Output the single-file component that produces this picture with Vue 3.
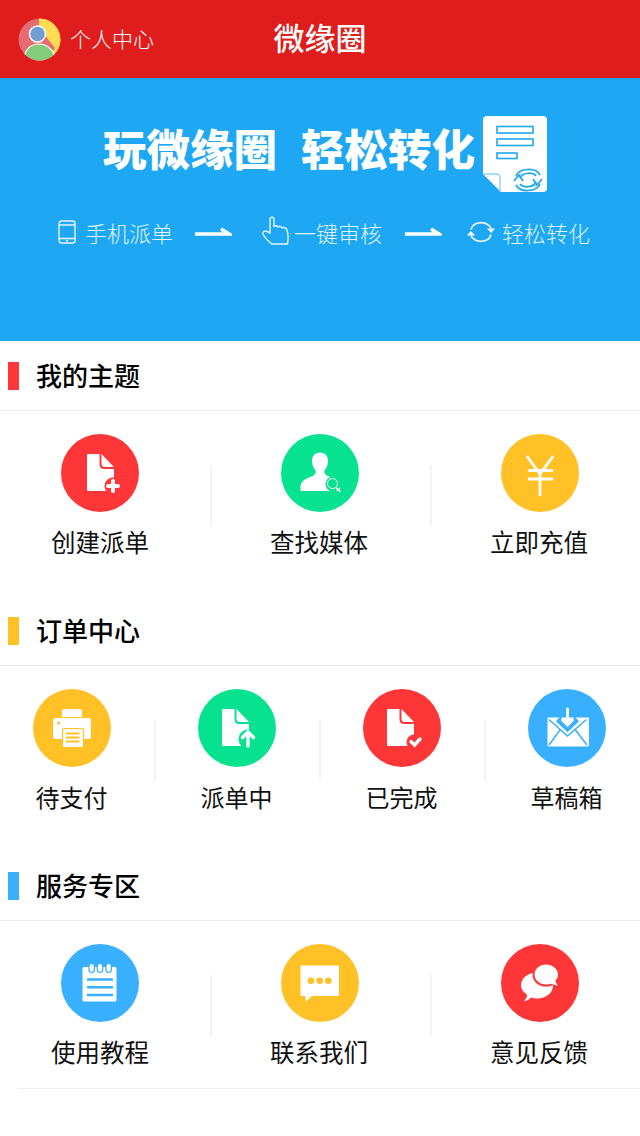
<template>
  <div class="page">
    <header class="top">
      <div class="user">
        <svg class="avatar" viewBox="0 0 43 43">
          <defs>
            <clipPath id="av"><circle cx="21.5" cy="21.5" r="21" /></clipPath>
          </defs>
          <g clip-path="url(#av)">
            <rect width="43" height="43" fill="#e56c70" />
            <path d="M21 0H43V43H30L37 30 21 10Z" fill="#fbdc52" />
            <path d="M6 43C6 32 12 26 21 26 30 26 37 33 37 43Z" fill="#82cc7c" stroke="#fff" stroke-width="1.2" />
            <circle cx="19.5" cy="16" r="8" fill="#719dd3" stroke="#fff" stroke-width="1.5" />
          </g>
        </svg>
        <span>个人中心</span>
      </div>
      <h1>微缘圈</h1>
    </header>

    <section class="banner">
      <div class="slogan">
        <span class="slogan-a">玩微缘圈</span>
        <span class="slogan-b">轻松转化</span>
        <svg class="doc" viewBox="0 0 64 77">
          <path d="M4 0H60Q64 0 64 4V72Q64 76 60 76H18L0 58V4Q0 0 4 0Z" fill="#fff" />
          <path d="M1 58H13Q17 58 17 62V76" fill="none" stroke="#8fd2f8" stroke-width="1.5" />
          <g fill="none" stroke="#1ea8f3" stroke-width="1.6">
            <rect x="14" y="10.5" width="36" height="6.5" />
            <rect x="14" y="23" width="36" height="6.5" />
            <rect x="14" y="37" width="20" height="5.5" />
            <path d="M33 60C36 52 53 51 57 59M57 68C54 76 37 77 33 69" stroke-width="1.7" />
            <path d="M37 62C40 56 50 56 53 60M53 66C50 72 40 72 37 68" stroke-width="1.7" />
            <path d="M31 65L36 59 40 65M50 63L54 69 59 63" stroke-width="1.7" />
          </g>
        </svg>
      </div>

      <div class="steps">
        <svg class="ic-phone" viewBox="0 0 18 24">
          <g fill="none" stroke="#fff" stroke-width="1.4" opacity=".9">
            <rect x="1" y="1" width="16" height="22" rx="2.5" />
            <path d="M1 5H17M1 18.5H17" />
          </g>
          <circle cx="9" cy="20.8" r="1" fill="#fff" />
        </svg>
        <span class="step-text">手机派单</span>
        <svg class="arrow" viewBox="0 0 38 12"><path d="M1 8H35L27 3" fill="none" stroke="#fff" stroke-width="3.4" /></svg>
        <svg class="ic-hand" viewBox="0 0 28 29">
          <path d="M8 17V3.500C8 0.500 12 0.500 12 3.500V10.500C13 9.500 15 9.500 16 11 17.200 10 19 10.200 20 11.800 21.500 11 24 11.500 25 14 26.500 18 26.500 22 25.500 28H9.500C6 24.500 3 22 1.200 18.500 0 16 3 14 5 15.500Z" fill="none" stroke="#fff" stroke-width="1.4" stroke-linejoin="round" opacity=".9" />
        </svg>
        <span class="step-text">一键审核</span>
        <svg class="arrow" viewBox="0 0 38 12"><path d="M1 8H35L27 3" fill="none" stroke="#fff" stroke-width="3.4" /></svg>
        <svg class="ic-refresh" viewBox="0 0 28 24">
          <g fill="none" stroke="#fff" stroke-width="1.6" opacity=".95">
            <path d="M4 9.500C6 2 18 -0.500 24 8" />
            <path d="M24 14.500C22 22 10 24.500 4 16" />
          </g>
          <path d="M20 8.500H28L24.200 13ZM0 15.500H8L3.800 11Z" fill="#fff" />
        </svg>
        <span class="step-text">轻松转化</span>
      </div>
    </section>

    <section v-for="sec in sections" :key="sec.title" class="block">
      <div class="block-head">
        <i class="mark" :class="sec.mark"></i>
        <h2>{{ sec.title }}</h2>
      </div>
      <div class="cells" :class="sec.items.length === 4 ? 'four' : 'three'">
        <div v-for="(it, i) in sec.items" :key="it.label" class="cell" :class="{ last: i === sec.items.length - 1 }">
          <svg class="disc" viewBox="0 0 78 78">
            <circle cx="39" cy="39" r="39" :fill="colors[it.color]" />

            <!-- 文件类 -->
            <g v-if="it.icon.startsWith('file')" :transform="it.icon === 'file-plus' ? 'translate(2 0)' : ''">
              <path d="M25 20H36.500V30Q36.500 35 41 35H51V57H25Q24 57 24 56V21Q24 20 25 20Z" fill="#fff" />
              <path d="M38.500 20L51 33H41.500Q38.500 33 38.500 30Z" fill="#fff" />
            </g>
            <g v-if="it.icon === 'file-plus'">
              <circle cx="52" cy="52" r="8.500" :fill="colors[it.color]" />
              <path d="M52 47V57M47 52H57" stroke="#fff" stroke-width="4" stroke-linecap="round" />
            </g>
            <g v-if="it.icon === 'file-up'">
              <circle cx="50" cy="50" r="9.500" :fill="colors[it.color]" />
              <path d="M50 57V44M44.500 48.500L50 43 55.500 48.500" fill="none" stroke="#fff" stroke-width="3.400" stroke-linecap="round" />
            </g>
            <g v-if="it.icon === 'file-ok'">
              <circle cx="51" cy="53" r="7.500" :fill="colors[it.color]" />
              <path d="M48 52.500L51.500 56 57 50" fill="none" stroke="#fff" stroke-width="3.400" stroke-linecap="round" />
            </g>

            <g v-if="it.icon === 'person'">
              <path d="M39 18.500C44 18.500 47 22 47 27 47 31 45.500 34 43.500 36.500 43 39 44 41 47 42 52 44 58 45 59 50V57H19.500V52C20 46 27 44 31.500 42 34 41 35 39 34.500 36.500 32.500 34 31 31 31 27 31 22 34 18.500 39 18.500Z" fill="#fff" />
              <circle cx="52" cy="50" r="7.500" :fill="colors[it.color]" />
              <circle cx="51.500" cy="49.500" r="5" fill="none" stroke="#fff" stroke-width="1" />
              <path d="M55 53.500L59.500 58" stroke="#fff" stroke-width="1.500" />
            </g>

            <path v-if="it.icon === 'yen'" d="M26.500 23L39 40 51.500 23M39 40V61M28 36.500H51M28 45H51" fill="none" stroke="#fff" stroke-width="2.800" stroke-linecap="round" />

            <g v-if="it.icon === 'printer'">
              <path d="M31 20H47Q49 20 49 22V28H29V22Q29 20 31 20Z" fill="#fff" />
              <rect x="20" y="29" width="38" height="21" rx="2.500" fill="#fff" />
              <circle cx="25.700" cy="34" r="1.600" :fill="colors[it.color]" />
              <rect x="29.500" y="39.500" width="21" height="19" rx="1.500" fill="#fff" :stroke="colors[it.color]" stroke-width="1.200" />
              <path d="M33 44.500H46.500M33 48.500H46.500M33 52.500H46.500" :stroke="colors[it.color]" stroke-width="1.800" />
            </g>

            <g v-if="it.icon === 'mail'">
              <path d="M20 28.500H61V56Q61 57.500 59.500 57.500H21Q19.500 57.500 19.500 56V29Z" fill="#fff" />
              <path d="M21 30.500L39.500 47 58.500 30.500M21 56L32 41M59 56L47.500 41" fill="none" :stroke="colors[it.color]" stroke-width="1.500" />
              <path d="M30 30L39.500 39 49 30" fill="none" :stroke="colors[it.color]" stroke-width="6" />
              <path d="M39.500 20V35M34.500 31L39.500 36 44.500 31" fill="none" stroke="#fff" stroke-width="2.800" stroke-linecap="round" />
            </g>

            <g v-if="it.icon === 'note'">
              <rect x="21.500" y="23" width="34" height="34.500" rx="1.500" fill="#fff" />
              <g fill="#fff" :stroke="colors[it.color]" stroke-width="1.200">
                <rect x="28" y="19.500" width="5.400" height="9" rx="2.700" />
                <rect x="36.300" y="19.500" width="5.400" height="9" rx="2.700" />
                <rect x="45" y="19.500" width="5.400" height="9" rx="2.700" />
              </g>
              <path d="M27 35.500H51M27 43.300H51M27 51H51" :stroke="colors[it.color]" stroke-width="2.600" stroke-linecap="round" />
            </g>

            <g v-if="it.icon === 'chat'">
              <path d="M20.500 21.500H57Q58 21.500 58 22.500V51Q58 52 57 52H31L25 57.500 24 52H20.500Q19.500 52 19.500 51V22.500Q19.500 21.500 20.500 21.500Z" fill="#fff" />
              <circle cx="30" cy="36.700" r="3.300" :fill="colors[it.color]" />
              <circle cx="38.700" cy="36.700" r="3.300" :fill="colors[it.color]" />
              <circle cx="47.300" cy="36.700" r="3.300" :fill="colors[it.color]" />
            </g>

            <g v-if="it.icon === 'talk'">
              <path d="M36 28.500C45 28.500 52 34 52 41.500 52 49 45 54.500 36 54.500 33.500 54.500 32 54 30 53.500 28 55.500 26 57 23 57 25 55 26.200 53 26 50.500 22 48 20 45 20 41.500 20 34 27 28.500 36 28.500Z" fill="#fff" />
              <ellipse cx="45" cy="31" rx="13.500" ry="11.500" :fill="colors[it.color]" />
              <path d="M45 20.500C51.500 20.500 57 25 57 30.500 57 33 56 35 54.500 36.500 54.500 38.500 55.500 40 57 41.500 54 41.500 52 40.500 50.500 39.800 49 40.300 47 40.500 45 40.500 38.500 40.500 33.500 36 33.500 30.500 33.500 25 38.500 20.500 45 20.500Z" fill="#fff" />
            </g>
          </svg>
          <span class="label">{{ it.label }}</span>
        </div>
      </div>
    </section>
    <div class="end-line"></div>
  </div>
</template>

<script setup>
const colors = {
  red: "#fe3637",
  green: "#06e290",
  yellow: "#ffc125",
  blue: "#38afff",
}

const sections = [
  {
    title: "我的主题",
    mark: "red",
    items: [
      { label: "创建派单", color: "red", icon: "file-plus" },
      { label: "查找媒体", color: "green", icon: "person" },
      { label: "立即充值", color: "yellow", icon: "yen" },
    ],
  },
  {
    title: "订单中心",
    mark: "yellow",
    items: [
      { label: "待支付", color: "yellow", icon: "printer" },
      { label: "派单中", color: "green", icon: "file-up" },
      { label: "已完成", color: "red", icon: "file-ok" },
      { label: "草稿箱", color: "blue", icon: "mail" },
    ],
  },
  {
    title: "服务专区",
    mark: "blue",
    items: [
      { label: "使用教程", color: "blue", icon: "note" },
      { label: "联系我们", color: "yellow", icon: "chat" },
      { label: "意见反馈", color: "red", icon: "talk" },
    ],
  },
]
</script>

<style>
body {
  background: #fff;
}
</style>

<style scoped>
.page {
  width: 640px;
  height: 1136px;
  overflow: hidden;
  background: #fff;
  font-family: "Noto Sans CJK SC", "Noto Sans", sans-serif;
  color: #111;
}

/* ===== Top bar ===== */
.top {
  height: 78px;
  background: #df1d1c;
  display: grid;
  grid-template-columns: 1fr auto 1fr;
  align-items: center;
  color: #fff;
}

.user {
  display: flex;
  align-items: center;
  gap: 9px;
  padding-left: 18px;
  font-size: 21px;
  font-weight: 300;
}

.user span {
  margin-bottom: 3px;
}

.avatar {
  width: 43px;
  height: 43px;
}

.top h1 {
  margin: 0 0 6px;
  font-size: 31px;
  font-weight: 500;
}

/* ===== Banner ===== */
.banner {
  height: 263px;
  background: #1ea8f3;
  color: #fff;
  box-sizing: border-box;
  padding: 38px 0 0;
}

.slogan {
  display: flex;
  align-items: flex-start;
  padding-left: 103px;
  font-size: 43.5px;
  font-weight: 900;
  line-height: 64px;
}

.slogan-b {
  margin-left: 24px;
}

.doc {
  width: 64px;
  height: 77px;
  margin-left: 8px;
}

.steps {
  display: flex;
  align-items: center;
  height: 32px;
  margin-top: 23px;
  padding-left: 58px;
  font-size: 22px;
  font-weight: 300;
}

.step-text {
  width: 88px;
  white-space: nowrap;
  color: rgba(255, 255, 255, 0.88);
}

.ic-phone {
  width: 18px;
  height: 24px;
  margin-right: 9px;
}

.arrow {
  width: 38px;
  height: 12px;
  margin: 0 30px 0 21px;
}

.ic-hand {
  width: 28px;
  height: 29px;
  margin: -3px 4px 0 0;
}

.ic-hand + .step-text {
  margin-right: 1px;
}

.arrow + .ic-refresh {
  margin-left: -5px;
}

.ic-refresh {
  width: 28px;
  height: 24px;
  margin-right: 7px;
}

/* ===== Sections ===== */
.block {
  height: 255px;
}

.block-head {
  height: 69px;
  display: flex;
  align-items: center;
  border-bottom: 1px solid #e9e9e9;
}

.block-head h2 {
  margin: 0 0 2px;
  font-size: 26px;
  font-weight: 500;
  line-height: 1;
  color: #000;
}

.mark {
  width: 11px;
  height: 28px;
  margin: 0 17px 0 8px;
}

.mark.red {
  background: #fe3637;
}

.mark.yellow {
  background: #ffc125;
}

.mark.blue {
  background: #38afff;
}

.cells {
  display: grid;
  width: 660px;
  margin-left: -10px;
  padding-top: 23px;
}

.cells.three {
  grid-template-columns: repeat(3, 220px);
}

.cells.four {
  margin-left: -11px;
  grid-template-columns: repeat(4, 165px);
}

.block:first-of-type .cells {
  padding-top: 22px;
}

.cell {
  position: relative;
  display: flex;
  flex-direction: column;
  align-items: center;
}

.cell:not(.last)::after {
  content: "";
  position: absolute;
  top: 31px;
  right: -2px;
  width: 2px;
  height: 61px;
  background: #f1f2fd;
}

.disc {
  width: 78px;
  height: 78px;
}

.label {
  margin-top: 14px;
  font-size: 24.5px;
  line-height: 32px;
  color: #111;
}

.cells.three .cell:not(:first-child) .label {
  margin-right: 2px;
}

.cells.four .label {
  font-size: 24px;
}

.end-line {
  height: 1px;
  margin: -18px 0 0 18px;
  background: #efefef;
}
</style>
